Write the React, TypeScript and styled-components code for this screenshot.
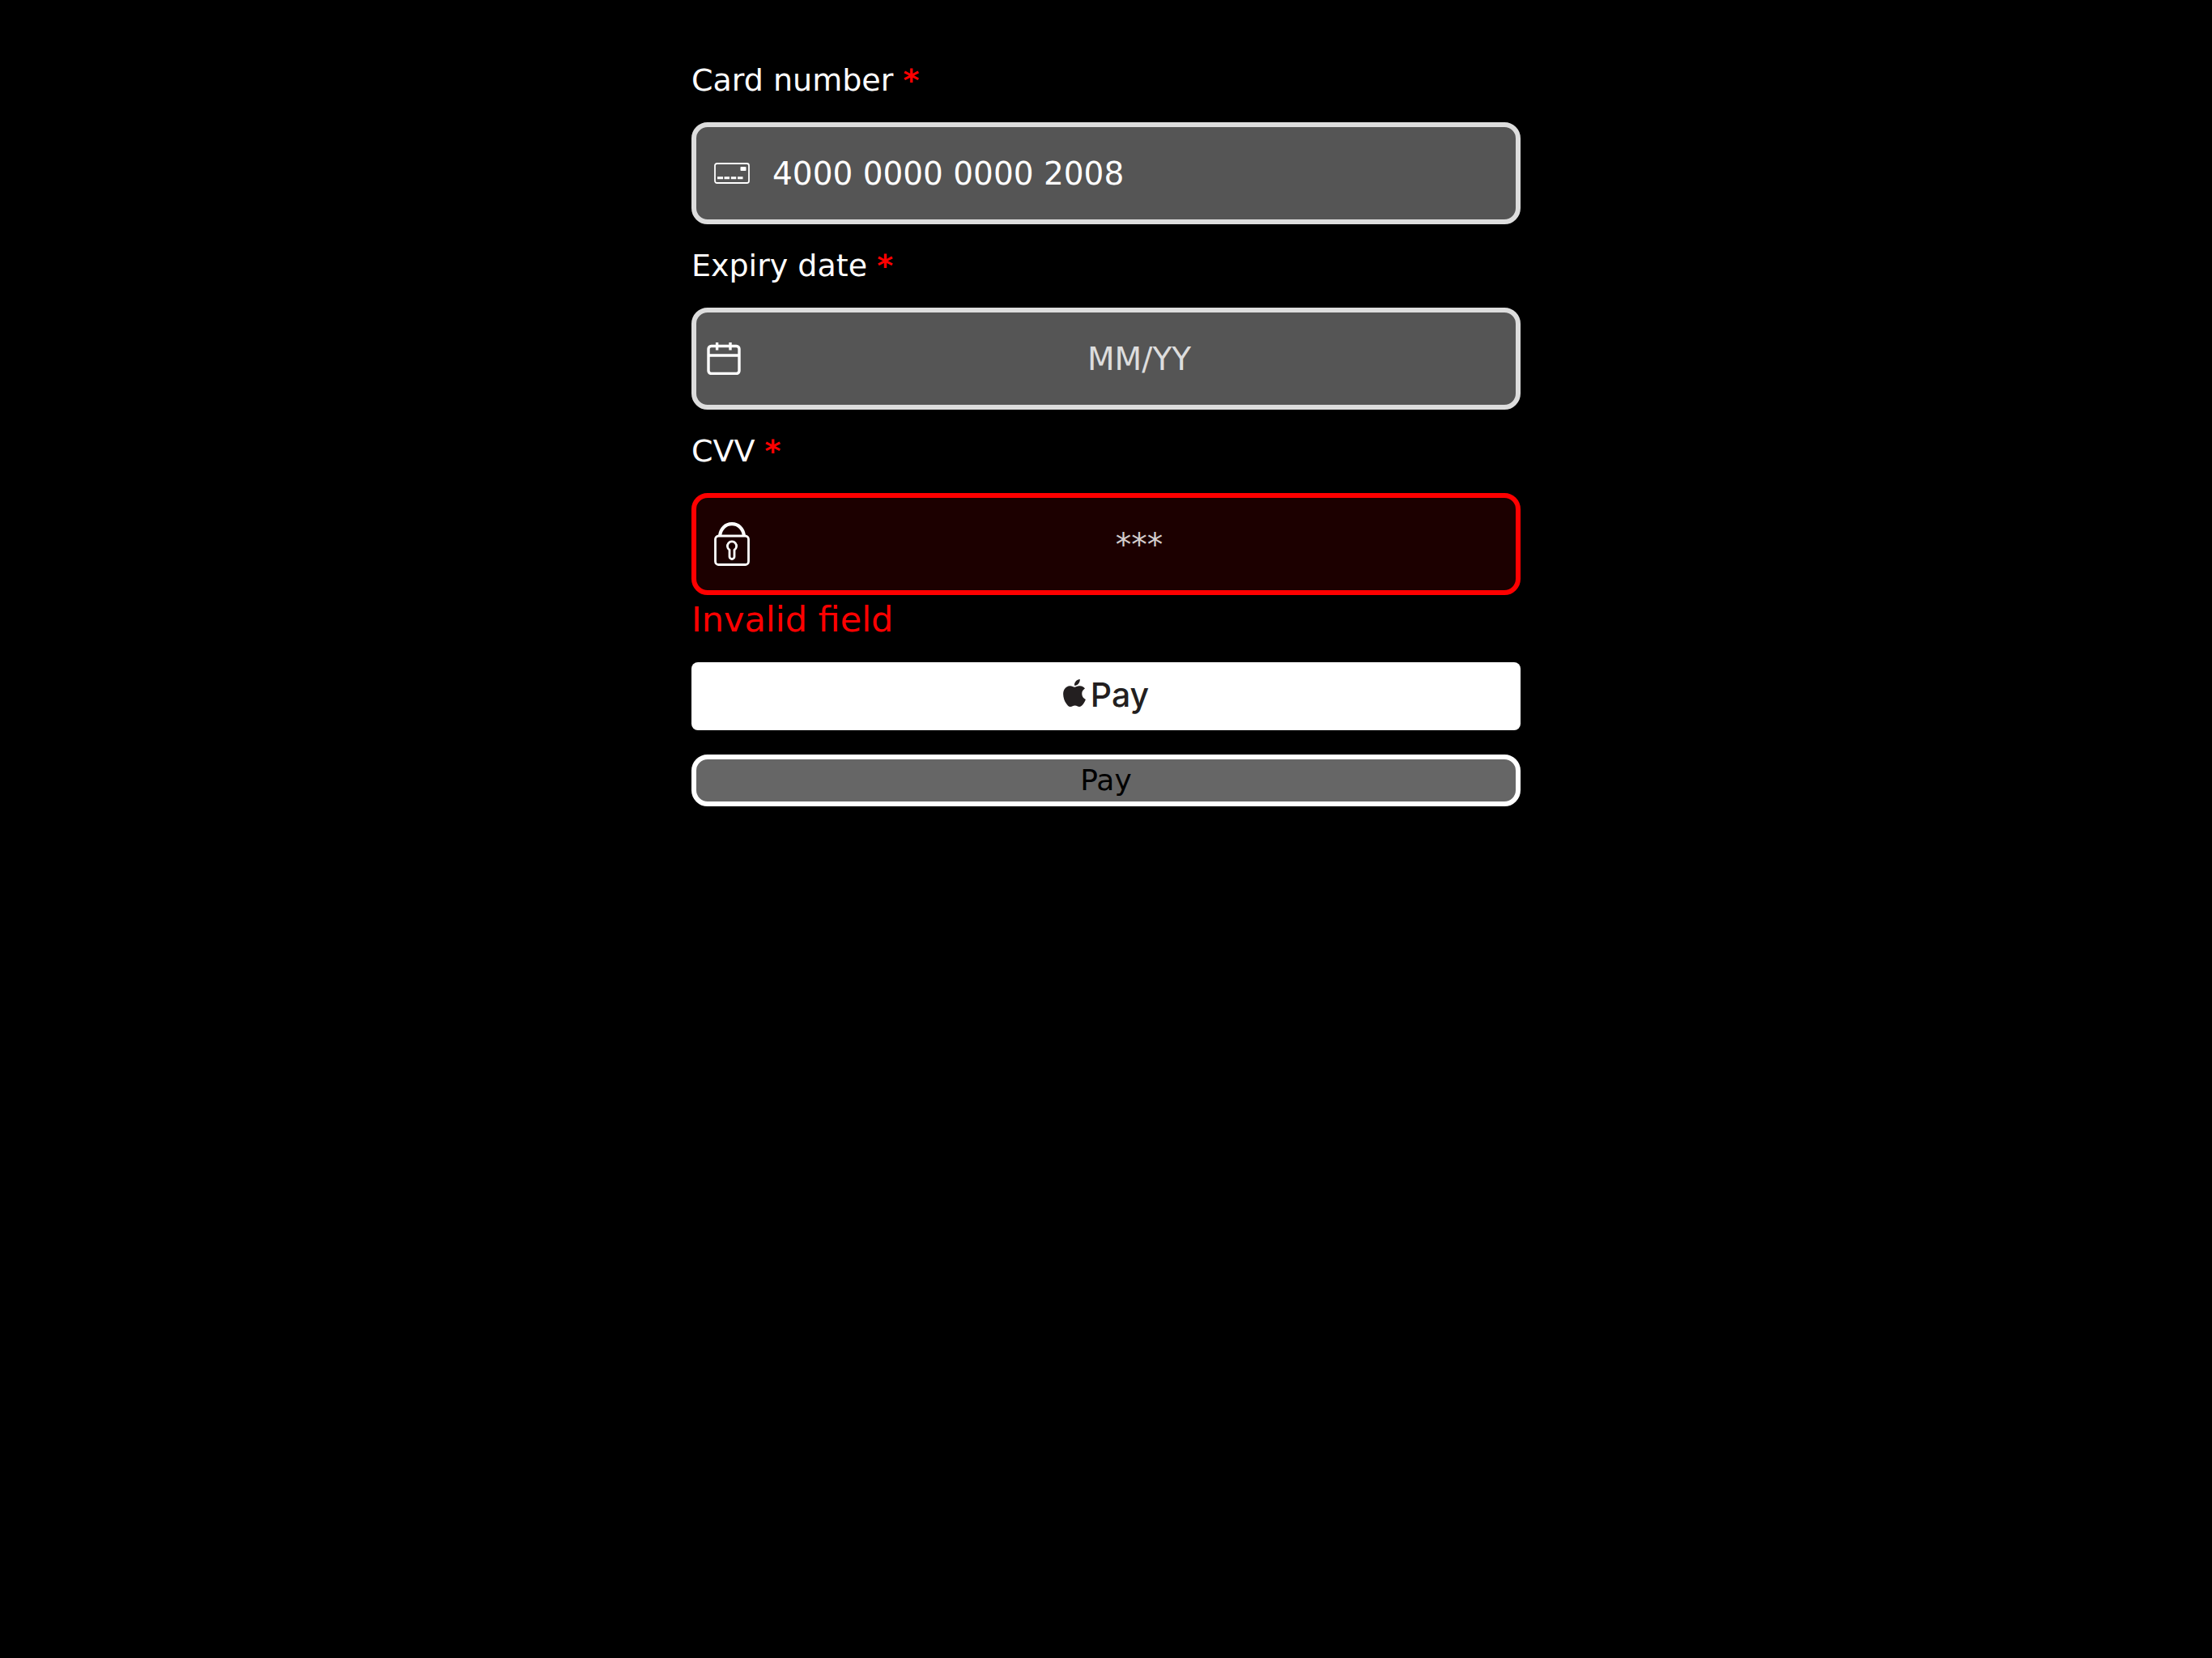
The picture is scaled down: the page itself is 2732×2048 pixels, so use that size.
import React from "react";
import styled, { createGlobalStyle } from "styled-components";

const GlobalStyle = createGlobalStyle`
  *, *::before, *::after { box-sizing: border-box; }
  body {
    margin: 0;
    background: #000;
    color: #fff;
    font-family: "DejaVu Sans", sans-serif;
  }
`;

const Page = styled.main`
  display: flex;
  justify-content: center;
  padding: 77px 24px 48px;
`;

const Form = styled.form`
  display: flex;
  flex-direction: column;
  gap: 29px;
  width: 100%;
  max-width: 1024px;
`;

const Field = styled.div`
  display: flex;
  flex-direction: column;
`;

const Label = styled.label`
  margin-bottom: 30px;
  font-size: 38px;
  line-height: 44px;
`;

const Required = styled.span`
  color: #f00;
  font-weight: 700;
`;

const Control = styled.div<{ $invalid?: boolean }>`
  display: flex;
  align-items: center;
  height: 126px;
  border: 6px solid ${(p) => (p.$invalid ? "#f00" : "#ddd")};
  border-radius: 20px;
  background: ${(p) => (p.$invalid ? "#1c0000" : "#555")};
`;

const IconSlot = styled.span<{ $inset: number }>`
  display: flex;
  flex: none;
  width: 82px;
  padding-left: ${(p) => p.$inset}px;

  svg {
    display: block;
    flex: none;
  }
`;

const Input = styled.input<{ $centered?: boolean; $invalid?: boolean }>`
  flex: 1;
  min-width: 0;
  height: 100%;
  padding: 0 0 0 ${(p) => (p.$centered ? 0 : 12)}px;
  border: 0;
  outline: 0;
  background: transparent;
  color: #fff;
  font-family: inherit;
  font-size: 39px;
  text-align: ${(p) => (p.$centered ? "center" : "left")};

  &::placeholder {
    color: ${(p) => (p.$invalid ? "#d2cccc" : "#ddd")};
    opacity: 1;
  }
`;

const ErrorText = styled.span`
  padding-top: 6px;
  color: #f00;
  font-size: 43px;
  line-height: 48px;
`;

const Actions = styled.div`
  display: flex;
  flex-direction: column;
  gap: 30px;
`;

const ApplePayButton = styled.button`
  display: flex;
  align-items: center;
  justify-content: center;
  gap: 6px;
  height: 84px;
  padding: 0 0 4px;
  border: 0;
  border-radius: 8px;
  background: #fff;
  color: #231f20;
  font-family: Inter, sans-serif;
  font-size: 41px;
  font-weight: 500;
  line-height: 44px;
  cursor: pointer;

  svg {
    display: block;
    margin-bottom: 4px;
  }
`;

const PayButton = styled.button`
  height: 64px;
  padding: 0;
  border: 6px solid #fff;
  border-radius: 20px;
  background: #666;
  color: #000;
  font-family: inherit;
  font-size: 36px;
  line-height: 44px;
  cursor: pointer;
`;

const CardIcon = () => (
  <svg width="44" height="26" viewBox="0 0 44 26" fill="none" aria-hidden="true">
    <rect x="1" y="1" width="42" height="24" rx="2.5" stroke="#fff" strokeWidth="1.8" />
    <rect x="32.5" y="5" width="7" height="5" rx="0.8" fill="#fff" />
    <path d="M4 18.7h7M12.5 18.7h6.5M20.8 18.7h6.5M29 18.7h6.5" stroke="#fff" strokeWidth="3" />
  </svg>
);

const CalendarIcon = () => (
  <svg width="42" height="40" viewBox="0 0 42 40" fill="none" stroke="#fff" strokeWidth="3.4" aria-hidden="true">
    <rect x="2" y="4.5" width="38" height="34" rx="3.5" />
    <path d="M2 16h38M12.6 0v9.5M29 0v9.5" />
  </svg>
);

const LockIcon = () => (
  <svg width="44" height="54" viewBox="0 0 44 54" fill="none" stroke="#fff" aria-hidden="true">
    <rect x="1.5" y="17" width="41" height="35.5" rx="4" strokeWidth="2.8" />
    <path d="M7 17C8 8 14 2.200 22 2.200S36 8 37 17" strokeWidth="4.2" />
    <path d="M19 34.3a5.600 5.600 0 1 1 6 0v8.200a3 3 0 0 1-6 0z" strokeWidth="2.8" strokeLinejoin="round" />
  </svg>
);

const AppleLogo = () => (
  <svg width="28" height="34" viewBox="2.2 0 19.6 24" fill="currentColor" aria-hidden="true">
    <path d="M12.152 6.896c-.948 0-2.415-1.078-3.96-1.04-2.04.027-3.91 1.183-4.961 3.014-2.117 3.675-.546 9.103 1.519 12.09 1.013 1.454 2.208 3.09 3.792 3.039 1.52-.065 2.09-.987 3.935-.987 1.831 0 2.35.987 3.96.948 1.637-.026 2.676-1.48 3.676-2.948 1.156-1.688 1.636-3.325 1.662-3.415-.039-.013-3.182-1.221-3.22-4.857-.026-3.04 2.48-4.494 2.597-4.559-1.429-2.09-3.623-2.324-4.39-2.376-2-.156-3.675 1.09-4.61 1.09zM15.53 3.83c.843-1.012 1.4-2.427 1.245-3.83-1.207.052-2.662.805-3.532 1.818-.78.896-1.454 2.338-1.273 3.714 1.338.104 2.715-.688 3.559-1.701" />
  </svg>
);

export default function App() {
  const [number, setNumber] = React.useState("4000 0000 0000 2008");
  const [expiry, setExpiry] = React.useState("");
  const [cvv, setCvv] = React.useState("");

  return (
    <>
      <GlobalStyle />
      <Page>
        <Form noValidate onSubmit={(e) => e.preventDefault()}>
          <Field>
            <Label htmlFor="card-number">
              Card number <Required>*</Required>
            </Label>
            <Control>
              <IconSlot $inset={22}>
                <CardIcon />
              </IconSlot>
              <Input
                id="card-number"
                inputMode="numeric"
                value={number}
                onChange={(e) => setNumber(e.target.value)}
              />
            </Control>
          </Field>

          <Field>
            <Label htmlFor="expiry-date">
              Expiry date <Required>*</Required>
            </Label>
            <Control>
              <IconSlot $inset={13}>
                <CalendarIcon />
              </IconSlot>
              <Input
                id="expiry-date"
                $centered
                placeholder="MM/YY"
                value={expiry}
                onChange={(e) => setExpiry(e.target.value)}
              />
            </Control>
          </Field>

          <Field>
            <Label htmlFor="cvv">
              CVV <Required>*</Required>
            </Label>
            <Control $invalid>
              <IconSlot $inset={22}>
                <LockIcon />
              </IconSlot>
              <Input
                id="cvv"
                $centered
                $invalid
                aria-invalid="true"
                aria-describedby="cvv-error"
                placeholder="***"
                value={cvv}
                onChange={(e) => setCvv(e.target.value)}
              />
            </Control>
            <ErrorText id="cvv-error">Invalid field</ErrorText>
          </Field>

          <Actions>
            <ApplePayButton type="button">
              <AppleLogo />
              Pay
            </ApplePayButton>
            <PayButton type="submit">Pay</PayButton>
          </Actions>
        </Form>
      </Page>
    </>
  );
}
